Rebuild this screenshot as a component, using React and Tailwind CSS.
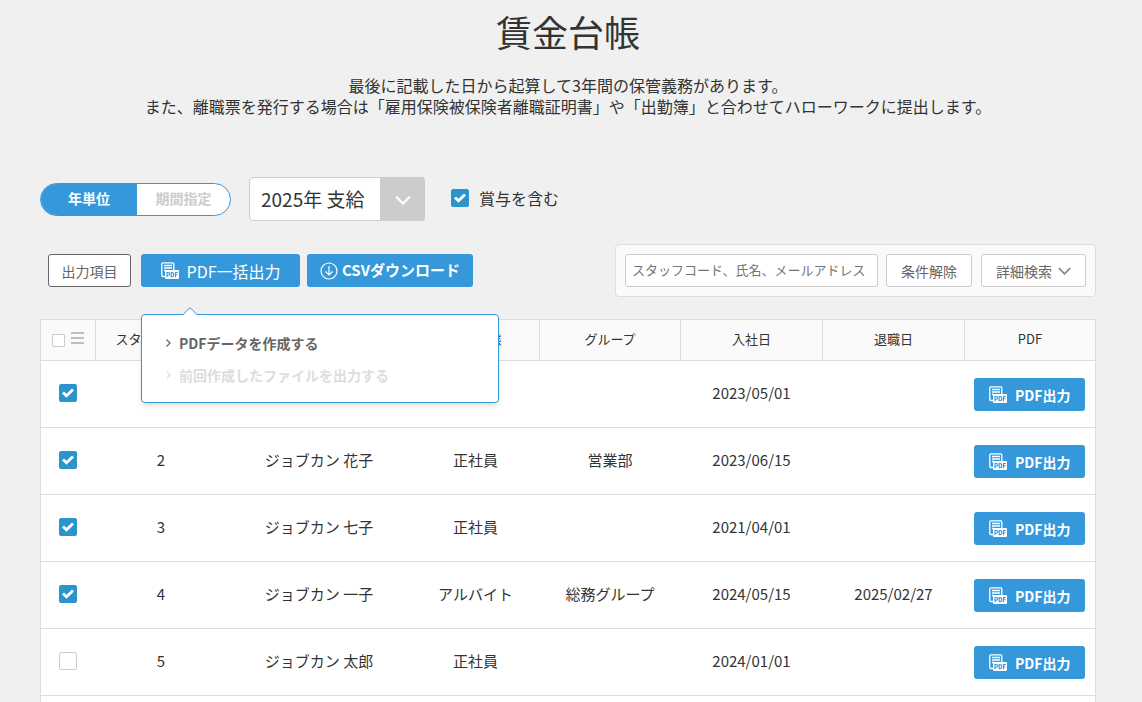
import { useState } from "react";

const rows = [
  { code: "", name: "", type: "", group: "", joined: "2023/05/01", left: "", checked: true },
  { code: "2", name: "ジョブカン 花子", type: "正社員", group: "営業部", joined: "2023/06/15", left: "", checked: true },
  { code: "3", name: "ジョブカン 七子", type: "正社員", group: "", joined: "2021/04/01", left: "", checked: true },
  { code: "4", name: "ジョブカン 一子", type: "アルバイト", group: "総務グループ", joined: "2024/05/15", left: "2025/02/27", checked: true },
  { code: "5", name: "ジョブカン 太郎", type: "正社員", group: "", joined: "2024/01/01", left: "", checked: false },
];

function PdfIcon() {
  return (
    <svg className="h-[18px] w-[18px] shrink-0" viewBox="0 0 18 18" fill="none" aria-hidden="true">
      <path d="M4 14.500H1.800A1 1 0 0 1 .8 13.500V1.800a1 1 0 0 1 1-1h10a1 1 0 0 1 1 1V8" stroke="#fff" strokeWidth="1.300" />
      <path d="M3 3.500h8M3 6h8M3 8.500h2" stroke="#fff" strokeWidth="1.500" />
      <rect x="4" y="8" width="14" height="9" rx="1" fill="#fff" />
      <path d="M6 15.200v-4.700h1.300a1.300 1.300 0 0 1 0 2.700H6M10.200 10.500v4.200h.8c2.300 0 2.300-4.200 0-4.200zM14.500 15.200v-4.700h2.300M14.500 12.800h2" stroke="#3498db" strokeWidth="1.100" />
    </svg>
  );
}

function DownArrow({ className }) {
  return (
    <svg className={className} viewBox="0 0 16 10" fill="none" aria-hidden="true">
      <path d="M1 1.500 8 8.500l7-7" stroke="currentColor" strokeWidth="2.200" />
    </svg>
  );
}

function RightArrow() {
  return (
    <svg className="h-2 w-[5px]" viewBox="0 0 5 8" fill="none" aria-hidden="true">
      <path d="M.5.5 4 4 .5 7.500" stroke="currentColor" strokeWidth="1.300" />
    </svg>
  );
}

function Check({ id, label, defaultChecked }) {
  return (
    <span className="relative block h-[18px] w-[18px]">
      <input
        id={id}
        type="checkbox"
        aria-label={label}
        defaultChecked={defaultChecked}
        className="peer block h-[18px] w-[18px] appearance-none rounded-[2px] border border-[#ccc] bg-white checked:border-[#2c94cc] checked:bg-[#2c94cc]"
      />
      <svg className="pointer-events-none absolute inset-0 hidden h-[18px] w-[18px] peer-checked:block" viewBox="0 0 18 18" fill="none" aria-hidden="true">
        <path d="M4 8.500 7.500 11.800 14 5.500" stroke="#fff" strokeWidth="2.800" />
      </svg>
    </span>
  );
}

export default function App() {
  const [open, setOpen] = useState(true);

  return (
    <div className="h-screen overflow-hidden bg-[#f0f0f0] pl-10 pr-[46px] font-['Noto_Sans_CJK_JP',sans-serif] text-[#333]">
      <h1 className="pt-[6px] text-center text-4xl leading-[50px] font-normal">賃金台帳</h1>
      <p className="mt-[19px] text-center text-base leading-[21px]">
        最後に記載した日から起算して3年間の保管義務があります。
        <br />
        また、離職票を発行する場合は「雇用保険被保険者離職証明書」や「出勤簿」と合わせてハローワークに提出します。
      </p>

      {/* 期間 */}
      <div className="mt-[60px] flex items-center">
        <div className="flex h-[33px] overflow-hidden rounded-full border border-[#3498db] bg-white text-sm font-bold">
          <button className="w-24 bg-[#3498db] pb-[2px] text-white">年単位</button>
          <button className="w-[93px] pb-[2px] text-[#ccc]">期間指定</button>
        </div>
        <div className="relative ml-[18px] h-11 w-44">
          <select aria-label="支給年" className="h-full w-full appearance-none rounded border border-[#ccc] bg-white pl-[11px] text-[19px]">
            <option>2025年 支給</option>
          </select>
          <span className="pointer-events-none absolute inset-y-0 right-0 flex w-[45px] items-center justify-center rounded-r bg-[#ccc] pt-[2px] text-white">
            <DownArrow className="h-[10px] w-4" />
          </span>
        </div>
        <div className="ml-[26px] flex items-center gap-[10px] pb-[2px]">
          <Check id="bonus" defaultChecked />
          <label htmlFor="bonus" className="text-base">賞与を含む</label>
        </div>
      </div>

      {/* 操作 */}
      <div className="mt-[23px] flex items-center justify-between">
        <div className="flex gap-[7px] pl-2">
          <button className="mr-[3px] h-[33px] w-[83px] rounded-[3px] border border-[#666] bg-white text-sm text-[#666]">出力項目</button>
          <div className="relative">
            <button
              onClick={() => setOpen(!open)}
              className="flex h-[33px] w-[159px] items-center justify-center gap-2 rounded-[3px] bg-[#3498db] text-base text-white"
            >
              <PdfIcon />
              PDF一括出力
            </button>
            {open && (
              <div className="absolute top-[60px] left-0 z-10 h-[89px] w-[358px] rounded border border-[#3498db] bg-white pt-[17px] pl-6 text-sm font-bold shadow-md">
                <svg className="absolute -top-2 left-10 h-[9px] w-4" viewBox="0 0 16 9" aria-hidden="true">
                  <path d="M0 8.500 8 .7l8 7.800V9H0z" fill="#fff" />
                  <path d="M.5 8 8 .7 15.500 8" fill="none" stroke="#3498db" />
                </svg>
                <button className="flex h-[22px] items-center gap-2 text-[#666]">
                  <RightArrow />
                  PDFデータを作成する
                </button>
                <button disabled className="mt-[10px] flex h-[22px] items-center gap-2 text-[#ddd]">
                  <RightArrow />
                  前回作成したファイルを出力する
                </button>
              </div>
            )}
          </div>
          <button className="flex h-[33px] w-[166px] items-center justify-center gap-1 rounded-[3px] bg-[#3498db] text-[15px] font-bold text-white">
            <svg className="h-[18px] w-[18px]" viewBox="0 0 18 18" fill="none" stroke="#fff" strokeWidth="1.200" aria-hidden="true">
              <circle cx="9" cy="9" r="8" />
              <path d="M9 4v9M5.500 9.500 9 13l3.500-3.500" />
            </svg>
            CSVダウンロード
          </button>
        </div>

        <div className="flex items-center rounded border border-[#ddd] bg-[#fafafa] p-[9px] text-sm text-[#666]">
          <input
            aria-label="スタッフ検索"
            placeholder="スタッフコード、氏名、メールアドレス"
            className="h-[33px] w-[253px] rounded-[3px] border border-[#ccc] bg-white px-[6px] pb-[2px] text-[13px] placeholder:text-[#757575]"
          />
          <button className="ml-2 h-[33px] w-[86px] rounded-[3px] border border-[#ccc] bg-white">条件解除</button>
          <button className="ml-[9px] flex h-[33px] w-[105px] items-center justify-center gap-[6px] rounded-[3px] border border-[#ccc] bg-white">
            詳細検索
            <DownArrow className="h-2 w-[13px] text-[#888]" />
          </button>
        </div>
      </div>

      <table className="mt-[22px] w-full table-fixed border-collapse border border-[#ddd] bg-white text-center text-[15px]">
        <colgroup>
          <col className="w-[55px]" />
          <col className="w-[131px]" />
          <col />
          <col className="w-[128px]" />
          <col className="w-[141px]" />
          <col className="w-[142px]" />
          <col className="w-[142px]" />
          <col className="w-[131px]" />
        </colgroup>
        <thead>
          <tr className="h-[41px] bg-[#fafafa] text-[13px] *:border *:border-[#ddd] *:p-0 *:pb-[2px] *:font-normal">
            <th>
              <div className="flex items-start justify-center gap-[6px]">
                <input type="checkbox" aria-label="すべて選択" className="mt-[2px] h-[13px] w-[13px] appearance-none rounded-[1px] border border-[#ccc] bg-white" />
                <svg className="h-[13px] w-[13px]" viewBox="0 0 13 13" stroke="#aaa" strokeWidth="1.500" aria-hidden="true">
                  <path d="M0 1h13M0 6h13M0 11h13" />
                </svg>
              </div>
            </th>
            <th>スタッフコード</th>
            <th aria-label="氏名" />
            <th>雇用形態</th>
            <th>グループ</th>
            <th>入社日</th>
            <th>退職日</th>
            <th>PDF</th>
          </tr>
        </thead>
        <tbody>
          {rows.map((row, i) => (
            <tr key={i} className="h-[67px] border-b border-[#ddd] *:p-0 *:pb-[2px]">
              <td>
                <div className="flex justify-center">
                  <Check label={`${i + 1}行目を選択`} defaultChecked={row.checked} />
                </div>
              </td>
              <td>{row.code}</td>
              <td>{row.name}</td>
              <td>{row.type}</td>
              <td>{row.group}</td>
              <td>{row.joined}</td>
              <td>{row.left}</td>
              <td>
                <button className="mx-auto mt-[2px] flex h-[33px] w-[111px] items-center justify-center gap-2 rounded-[3px] bg-[#3498db] pt-[2px] text-sm font-bold text-white">
                  <PdfIcon />
                  PDF出力
                </button>
              </td>
            </tr>
          ))}
          <tr className="h-[67px]"><td colSpan={8} /></tr>
        </tbody>
      </table>
    </div>
  );
}
